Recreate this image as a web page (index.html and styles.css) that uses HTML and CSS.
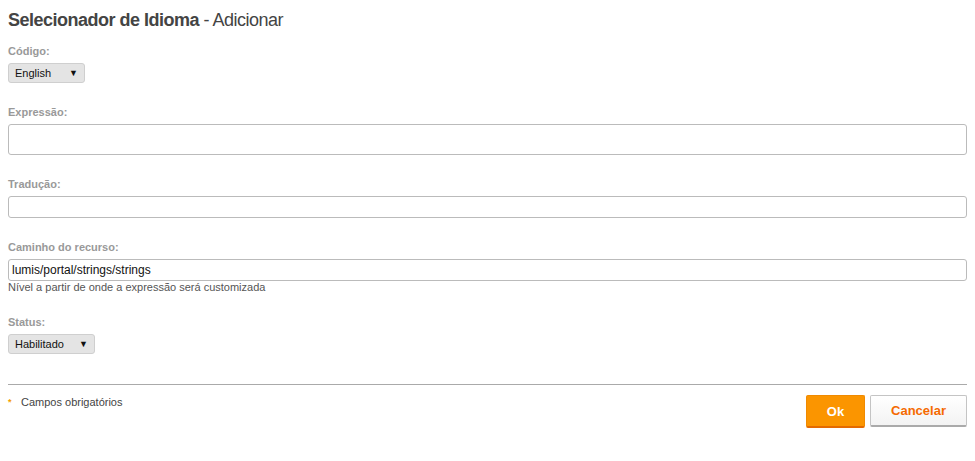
FILE: index.html
```html
<!DOCTYPE html>
<html lang="pt">
<head>
<meta charset="utf-8">
<title>Selecionador de Idioma - Adicionar</title>
<link rel="stylesheet" href="styles.css">
</head>
<body>
<div class="page">
  <h1 class="title"><strong>Selecionador de Idioma</strong> - Adicionar</h1>

  <div class="field">
    <div class="label">Código:</div>
    <div class="select sel-lang"><span>English</span><span class="arrow">▼</span></div>
  </div>

  <div class="field">
    <div class="label">Expressão:</div>
    <div class="input input-tall"></div>
  </div>

  <div class="field">
    <div class="label">Tradução:</div>
    <div class="input"></div>
  </div>

  <div class="field">
    <div class="label">Caminho do recurso:</div>
    <div class="input">lumis/portal/strings/strings</div>
    <div class="help">Nível a partir de onde a expressão será customizada</div>
  </div>

  <div class="field">
    <div class="label">Status:</div>
    <div class="select sel-status"><span>Habilitado</span><span class="arrow">▼</span></div>
  </div>

  <hr class="sep">

  <div class="footer">
    <div class="required"><span class="star">*</span>Campos obrigatórios</div>
    <div class="buttons">
      <button class="btn btn-ok">Ok</button>
      <button class="btn btn-cancel">Cancelar</button>
    </div>
  </div>
</div>
</body>
</html>
```

FILE: styles.css
```css
html, body {
  margin: 0;
  padding: 0;
  background: #fff;
}
body {
  font-family: "Liberation Sans", Arial, sans-serif;
  color: #444;
}
.page {
  padding: 8px;
}
.title {
  margin: 0 0 12px 0;
  font-size: 18px;
  line-height: 24px;
  font-weight: normal;
  color: #444;
  letter-spacing: -0.5px;
}
.title strong {
  font-weight: bold;
}
.field {
  margin-bottom: 22px;
}
.label {
  font-size: 11px;
  line-height: 14px;
  font-weight: bold;
  color: #999;
  margin-bottom: 5px;
}
.select {
  display: flex;
  align-items: center;
  justify-content: space-between;
  box-sizing: border-box;
  height: 20px;
  padding: 0 6px 0 6px;
  background: #e4e4e4;
  border: 1px solid #cfcfcf;
  border-radius: 3px;
  font-size: 11px;
  color: #111;
}
.sel-lang { width: 77px; }
.sel-status { width: 87px; }
.arrow {
  font-size: 9px;
  color: #111;
}
.input {
  box-sizing: border-box;
  height: 22px;
  border: 1px solid #bbb;
  border-radius: 3px;
  padding: 0 3px;
  font-size: 12px;
  line-height: 20px;
  color: #111;
}
.input-tall {
  height: 31px;
}
.help {
  font-size: 11px;
  line-height: 12px;
  color: #555;
}
.sep {
  margin: 30px 0 0 0;
  border: 0;
  border-top: 1px solid #aaa;
  height: 0;
}
.footer {
  display: flex;
  justify-content: space-between;
  align-items: flex-start;
  padding-top: 10px;
}
.required {
  font-size: 11px;
  line-height: 12px;
  color: #444;
  display: flex;
  align-items: flex-start;
  padding-top: 1px;
}
.star {
  color: #f5a000;
  font-size: 9px;
  line-height: 9px;
  font-weight: bold;
  width: 13px;
  padding-top: 2px;
  box-sizing: border-box;
}
.buttons {
  display: flex;
  gap: 5px;
  align-items: flex-start;
}
.btn {
  font-family: "Liberation Sans", Arial, sans-serif;
  font-size: 13px;
  font-weight: bold;
  height: 33px;
  box-sizing: border-box;
  border-radius: 2px;
  padding: 0;
  cursor: pointer;
}
.btn-ok {
  width: 59px;
  background: #fb9500;
  color: #fff;
  border: 1px solid #f08a00;
  border-bottom: 2px solid #e46a00;
}
.btn-cancel {
  width: 97px;
  height: 32px;
  background: linear-gradient(#ffffff, #f3f3f3);
  color: #f56a00;
  border: 1px solid #c4c4c4;
  border-bottom: 2px solid #aaa;
}
```
